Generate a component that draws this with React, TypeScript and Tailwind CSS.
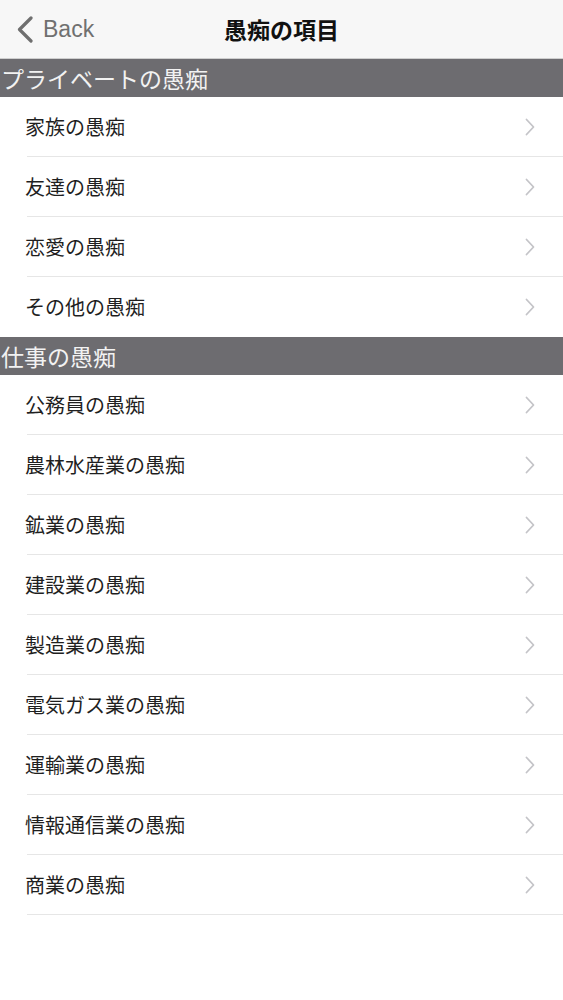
import React from "react";

const sections: { title: string; items: string[] }[] = [
  { title: "プライベートの愚痴", items: ["家族の愚痴", "友達の愚痴", "恋愛の愚痴", "その他の愚痴"] },
  {
    title: "仕事の愚痴",
    items: [
      "公務員の愚痴",
      "農林水産業の愚痴",
      "鉱業の愚痴",
      "建設業の愚痴",
      "製造業の愚痴",
      "電気ガス業の愚痴",
      "運輸業の愚痴",
      "情報通信業の愚痴",
      "商業の愚痴",
    ],
  },
];

const font = { fontFamily: '"Noto Sans CJK JP", "Noto Sans", sans-serif' };

function Chevron() {
  return (
    <svg width="12" height="18" viewBox="0 0 12 18" fill="none">
      <path d="M2.5 1.5L9.5 9L2.5 16.5" stroke="#c4c4c8" strokeWidth="1.8" strokeLinecap="round" strokeLinejoin="round" />
    </svg>
  );
}

export default function App() {
  return (
    <div className="w-[563px] h-[1000px] bg-white" style={font}>
      <div className="h-[59px] bg-[#f7f7f7] border-b border-[#cfcfcf] relative flex items-center">
        <div className="flex items-center pl-[16px] gap-[9px] text-[#707070]">
          <svg width="18" height="27" viewBox="0 0 18 27" fill="none">
            <path d="M15 2L3.5 13.5L15 25" stroke="#6f6f6f" strokeWidth="3.2" strokeLinecap="round" strokeLinejoin="round" />
          </svg>
          <span className="text-[23px] leading-none" style={{ fontFamily: '"Liberation Sans", Arial, sans-serif' }}>Back</span>
        </div>
        <div className="absolute inset-0 flex items-center justify-center pointer-events-none">
          <span className="text-[23px] font-bold text-[#111] leading-none">愚痴の項目</span>
        </div>
      </div>
      {sections.map((s) => (
        <div key={s.title}>
          <div className="h-[38px] bg-[#6d6c70] flex items-center pl-[1px] text-[23px] text-[#f2f2f2] leading-none">
            {s.title}
          </div>
          {s.items.map((it, i) => (
            <div key={it} className="pl-[27px]">
              <div
                className={`h-[60px] flex items-center justify-between pr-[27px] ${
                  i === s.items.length - 1 && s.title !== "仕事の愚痴" ? "" : "border-b border-[#e6e6e6]"
                }`}
              >
                <span className="text-[20px] text-[#1f1f1f] -ml-[2px] leading-none">{it}</span>
                <Chevron />
              </div>
            </div>
          ))}
        </div>
      ))}
    </div>
  );
}
